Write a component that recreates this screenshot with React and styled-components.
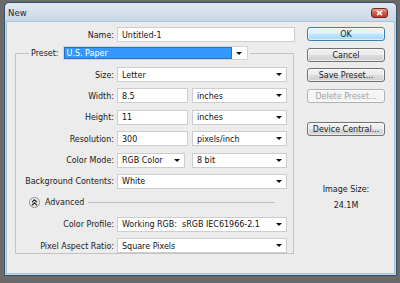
import React from "react";
import styled, { createGlobalStyle } from "styled-components";

const FONT = `"DejaVu Sans Condensed", "DejaVu Sans", sans-serif`;

const Global = createGlobalStyle`
  html, body { margin: 0; padding: 0; }
  body {
    background: #6a6a6a;
    width: 400px;
    height: 283px;
    overflow: hidden;
    font-family: ${FONT};
    font-size: 8.9px;
    color: #1a1a1a;
  }
  * { box-sizing: border-box; }
`;

const Window = styled.div`
  margin: 2px 0 0 4px;
  width: 393px;
  height: 274px;
  border: 1px solid #34506a;
  border-radius: 5px 5px 0 0;
  background: linear-gradient(#dfe8f1, #c8d6e4 20px, #c9d7e5);
  display: flex;
  flex-direction: column;
`;

const TitleBar = styled.div`
  height: 19px;
  display: flex;
  align-items: center;
  justify-content: space-between;
  padding: 0 8px 0 3px;
`;

const Title = styled.span`
  font-size: 9.5px;
  color: #1b2733;
`;

const CloseButton = styled.div`
  width: 17px;
  height: 10px;
  border: 1px solid #6b2b22;
  border-radius: 3px;
  background: linear-gradient(#e9a795, #cf5a48 50%, #b73a2b);
  display: flex;
  align-items: center;
  justify-content: center;
`;

const Client = styled.div`
  flex: 1;
  margin: 0 2px 2px;
  background: #ececec;
  display: flex;
  padding-top: 5px;
  box-shadow: 0 0 0 1px #a9c4d4;
`;

const LeftColumn = styled.div`
  width: 288px;
  display: flex;
  flex-direction: column;
`;

const RightColumn = styled.div`
  width: 78px;
  margin-left: 12px;
  display: flex;
  flex-direction: column;
  gap: 6.5px;
`;

const NameRow = styled.div`
  display: grid;
  grid-template-columns: 107px 178px;
  column-gap: 3px;
  align-items: center;
  height: 15px;
`;

const Label = styled.span`
  text-align: right;
  white-space: nowrap;
  color: #1a1a1a;
`;

const Field = styled.div`
  width: ${(p) => p.$w || "100%"};
  height: 15px;
  background: #fff;
  border: 1px solid #cdcdcd;
  padding: 0 4px 0 4px;
  display: flex;
  align-items: center;
  justify-content: space-between;
  white-space: nowrap;
  color: #111;
`;

const Arrow = styled.span`
  width: 0;
  height: 0;
  border-left: 3px solid transparent;
  border-right: 3px solid transparent;
  border-top: 3px solid #111;
  flex: none;
`;

const Group = styled.fieldset`
  margin: 4px 0 0 8px;
  width: 279px;
  padding: 0 5px 0 0;
  border: 1px solid #c3c3c3;
  min-inline-size: 0;
`;

const Legend = styled.legend`
  margin-left: 13px;
  padding: 0 2px;
  display: flex;
  align-items: center;
  height: 14px;
`;

const PresetLabel = styled.span`
  margin-right: 4px;
`;

const Combo = styled.div`
  width: 185px;
  height: 14px;
  background: #fff;
  border: 1px solid #d4d4d4;
  display: flex;
  align-items: center;
  padding-right: 5px;
`;

const Highlight = styled.div`
  width: 168px;
  height: 12px;
  background: #3399ff;
  border: 1px solid #2a6fc4;
  color: #fff;
  padding-left: 2px;
  display: flex;
  align-items: center;
  margin-right: auto;
`;

const Grid = styled.div`
  display: grid;
  grid-template-columns: 98px 170px;
  column-gap: 3px;
  row-gap: 6.4px;
  grid-auto-rows: 15px;
  align-items: center;
  padding-top: 7px;
`;

const Pair = styled.div`
  display: flex;
  justify-content: space-between;
`;

const AdvancedRow = styled.div`
  grid-column: 1 / -1;
  display: flex;
  align-items: center;
  height: 13px;
  margin: 6px 0 7px;
  padding-left: 13px;
`;

const Disclosure = styled.div`
  width: 11px;
  height: 11px;
  border-radius: 50%;
  border: 1px solid #8c8c8c;
  background: radial-gradient(circle at 50% 35%, #ffffff, #dcdcdc);
  display: flex;
  align-items: center;
  justify-content: center;
`;

const AdvancedText = styled.span`
  margin-left: 5px;
`;

const Rule = styled.div`
  flex: 1;
  height: 1px;
  background: #bdbdbd;
  margin: 0 12px 0 4px;
`;

const Button = styled.div`
  height: 14px;
  border: 1px solid ${(p) => (p.$primary ? "#3c7fb1" : p.$disabled ? "#adb2b5" : "#707070")};
  border-radius: 3px;
  background: ${(p) =>
    p.$primary
      ? "linear-gradient(#eaf6fd, #d9f0fc 50%, #bee6fd 50%, #a7d9f5)"
      : p.$disabled
      ? "#f4f4f4"
      : "linear-gradient(#f2f2f2, #ebebeb 50%, #dddddd 50%, #cfcfcf)"};
  color: ${(p) => (p.$disabled ? "#a3a3a3" : "#1a1a1a")};
  display: flex;
  align-items: center;
  justify-content: center;
  white-space: nowrap;
  margin-top: ${(p) => p.$gapBefore || 0};
  box-shadow: inset 0 0 0 1px rgba(255, 255, 255, 0.6);
`;

const ImageSize = styled.div`
  margin-top: 41px;
  text-align: center;
  line-height: 11px;
  display: flex;
  flex-direction: column;
  gap: 5px;
`;

function Select({ w, children }) {
  return (
    <Field $w={w}>
      <span>{children}</span>
      <Arrow />
    </Field>
  );
}

export default function App() {
  return (
    <>
      <Global />
      <Window>
        <TitleBar>
          <Title>New</Title>
          <CloseButton>
            <svg width="7" height="6" viewBox="0 0 7 6">
              <path d="M1 0.8 L6 5.2 M6 0.8 L1 5.2" stroke="#fff" strokeWidth="1.6" />
            </svg>
          </CloseButton>
        </TitleBar>
        <Client>
          <LeftColumn>
            <NameRow>
              <Label>Name:</Label>
              <Field>Untitled-1</Field>
            </NameRow>
            <Group>
              <Legend>
                <PresetLabel>Preset:</PresetLabel>
                <Combo>
                  <Highlight>U.S. Paper</Highlight>
                  <Arrow />
                </Combo>
              </Legend>
              <Grid>
                <Label>Size:</Label>
                <Select>Letter</Select>

                <Label>Width:</Label>
                <Pair>
                  <Field $w="71px">8.5</Field>
                  <Select w="95px">inches</Select>
                </Pair>

                <Label>Height:</Label>
                <Pair>
                  <Field $w="71px">11</Field>
                  <Select w="95px">inches</Select>
                </Pair>

                <Label>Resolution:</Label>
                <Pair>
                  <Field $w="71px">300</Field>
                  <Select w="95px">pixels/inch</Select>
                </Pair>

                <Label>Color Mode:</Label>
                <Pair>
                  <Select w="68px">RGB Color</Select>
                  <Select w="95px">8 bit</Select>
                </Pair>

                <Label>Background Contents:</Label>
                <Select>White</Select>

                <AdvancedRow>
                  <Disclosure>
                    <svg width="7" height="7" viewBox="0 0 7 7">
                      <path d="M1 3.2 L3.5 0.9 L6 3.2 M1 6.2 L3.5 3.9 L6 6.2" fill="none" stroke="#222" strokeWidth="1.2" />
                    </svg>
                  </Disclosure>
                  <AdvancedText>Advanced</AdvancedText>
                  <Rule />
                </AdvancedRow>

                <Label>Color Profile:</Label>
                <Select>Working RGB:&nbsp;&nbsp;sRGB IEC61966-2.1</Select>

                <Label>Pixel Aspect Ratio:</Label>
                <Select>Square Pixels</Select>
              </Grid>
            </Group>
          </LeftColumn>
          <RightColumn>
            <Button $primary>OK</Button>
            <Button>Cancel</Button>
            <Button>Save Preset...</Button>
            <Button $disabled>Delete Preset...</Button>
            <Button $gapBefore="13px">Device Central...</Button>
            <ImageSize>
              <span>Image Size:</span>
              <span>24.1M</span>
            </ImageSize>
          </RightColumn>
        </Client>
      </Window>
    </>
  );
}
